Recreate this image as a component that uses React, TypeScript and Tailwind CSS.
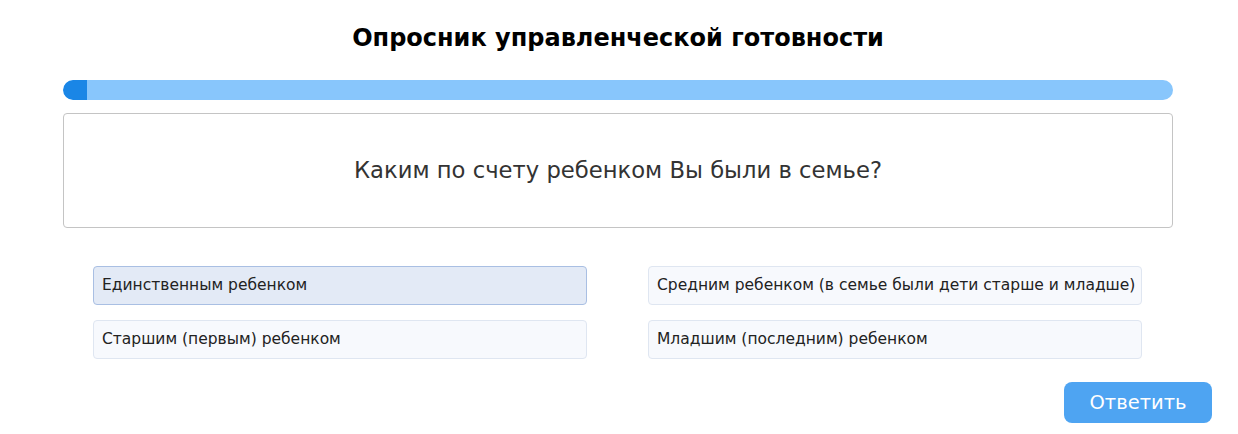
import React from "react";

const options = [
  "Единственным ребенком",
  "Средним ребенком (в семье были дети старше и младше)",
  "Старшим (первым) ребенком",
  "Младшим (последним) ребенком",
];

export default function App() {
  const selected = 0;
  return (
    <div
      className="w-[1238px] h-[434px] bg-white text-[#222] relative"
      style={{ fontFamily: '"DejaVu Sans", "Noto Sans", sans-serif' }}
    >
      <div className="pt-[22px] pl-[63px] pr-[65px]">
        <h1 className="text-center text-[24px] leading-[32px] font-bold text-black">
          Опросник управленческой готовности
        </h1>
        <div className="mt-[26px] h-[20px] rounded-full bg-[#88c6fc] overflow-hidden">
          <div className="h-full w-[24px] bg-[#1a86e6] rounded-l-full" />
        </div>
        <div className="mt-[13px] h-[115px] border border-[#c4c4c4] rounded-[4px] flex items-center justify-center">
          <p className="text-[22.7px] text-[#333]">Каким по счету ребенком Вы были в семье?</p>
        </div>
        <div className="mt-[38px] pl-[30px] grid grid-cols-[494px_494px] gap-x-[61px] gap-y-[15px]">
          {options.map((o, i) => (
            <div
              key={i}
              className={
                i === selected
                  ? "h-[39px] flex items-center px-[8px] rounded-[4px] border border-[#a9bfe3] bg-[#e3eaf6] text-[15.5px] text-[#222] whitespace-nowrap"
                  : "h-[39px] flex items-center px-[8px] rounded-[4px] border border-[#dfe6f1] bg-[#f7f9fd] text-[15.5px] text-[#222] whitespace-nowrap"
              }
            >
              {o}
            </div>
          ))}
        </div>
      </div>
      <div className="absolute left-[1064px] top-[382px] w-[148px] h-[41px] rounded-[8px] bg-[#4ea4f2] flex items-center justify-center text-white text-[19.5px]">
        Ответить
      </div>
    </div>
  );
}
